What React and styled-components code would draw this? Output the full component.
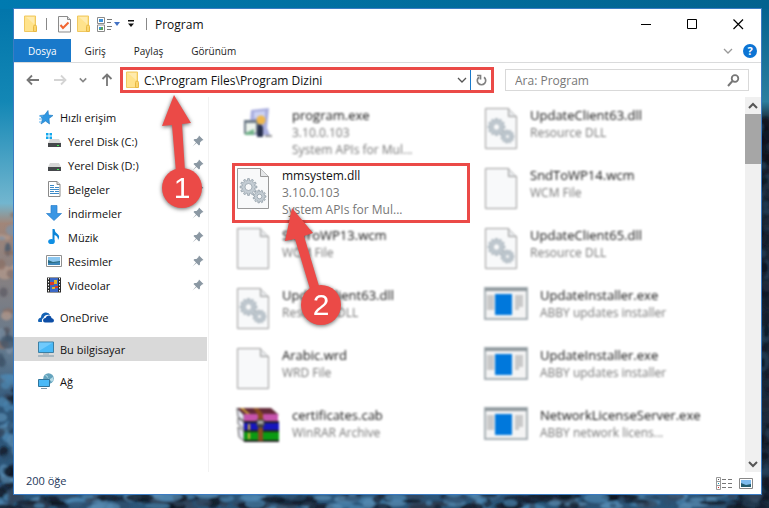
import React from 'react'
import styled, { createGlobalStyle, css } from 'styled-components'

const GlobalStyle = createGlobalStyle`
  * {
    box-sizing: border-box;
  }

  body {
    margin: 0;
    font-family: "Open Sans", "Noto Sans", sans-serif;
    font-size: 12px;
    color: #111;
  }

  button, input {
    font: inherit;
    color: inherit;
    border: none;
    background: none;
    padding: 0;
    margin: 0;
  }

  ul {
    list-style: none;
    margin: 0;
    padding: 0;
  }

  svg {
    display: block;
    flex: none;
  }
`

/* ---------- data ---------- */

const places = [
  { name: 'Hızlı erişim', icon: 'star' },
  { name: 'Yerel Disk (C:)', icon: 'system', child: true },
  { name: 'Yerel Disk (D:)', icon: 'disk', child: true },
  { name: 'Belgeler', icon: 'document', child: true },
  { name: 'İndirmeler', icon: 'download', child: true },
  { name: 'Müzik', icon: 'music', child: true },
  { name: 'Resimler', icon: 'picture', child: true },
  { name: 'Videolar', icon: 'video', child: true },
  { name: 'OneDrive', icon: 'cloud', spaced: true },
  { name: 'Bu bilgisayar', icon: 'computer', spaced: true, active: true },
  { name: 'Ağ', icon: 'network', spaced: true },
]

const files = [
  { name: 'program.exe', lines: ['3.10.0.103', 'System APIs for Mul...'], icon: 'program', wide: true },
  { name: 'UpdateClient63.dll', lines: ['Resource DLL'], icon: 'dll' },
  { name: 'mmsystem.dll', lines: ['3.10.0.103', 'System APIs for Mul...'], icon: 'dll', marked: true },
  { name: 'SndToWP14.wcm', lines: ['WCM File'], icon: 'file' },
  { name: 'SndToWP13.wcm', lines: ['WCM File'], icon: 'file' },
  { name: 'UpdateClient65.dll', lines: ['Resource DLL'], icon: 'dll' },
  { name: 'UpdateClient63.dll', lines: ['Resource DLL'], icon: 'dll' },
  { name: 'UpdateInstaller.exe', lines: ['ABBY updates installer'], icon: 'app', wide: true },
  { name: 'Arabic.wrd', lines: ['WRD File'], icon: 'file' },
  { name: 'UpdateInstaller.exe', lines: ['ABBY updates installer'], icon: 'app', wide: true },
  { name: 'certificates.cab', lines: ['WinRAR Archive'], icon: 'rar', wide: true },
  { name: 'NetworkLicenseServer.exe', lines: ['ABBY network licens...'], icon: 'app', wide: true },
]

/* ---------- wallpaper ---------- */

const rocks = []
let seed = 7
const rand = () => {
  seed = (seed * 16807) % 2147483647
  return seed / 2147483647
}
const leftColors = ['#8a6d62', '#b59a8c', '#5d5a63', '#7f93a6', '#3d5368']
const lowColors = ['#16202e', '#4b86b0', '#2c4f6e', '#0d141f', '#5a8db4', '#33455a']
for (let i = 0; i < 70; i++) {
  const y = 215 + rand() * 290
  const list = y < 370 ? leftColors : lowColors
  rocks.push({ x: rand() * 16, y, rx: 3 + rand() * 5, ry: 2 + rand() * 5, fill: list[i % list.length] })
}
for (let i = 0; i < 90; i++) {
  rocks.push({ x: 758 + rand() * 12, y: 118 + rand() * 390, rx: 2 + rand() * 4, ry: 3 + rand() * 7, fill: ['#0c1119', '#1c2b3c', '#24405a', '#141a26'][i % 4] })
}
for (let i = 0; i < 220; i++) {
  rocks.push({ x: rand() * 769, y: 494 + rand() * 15, rx: 3 + rand() * 12, ry: 2 + rand() * 3, fill: lowColors[i % 6] })
}

const Wallpaper = () => (
  <WallpaperSvg viewBox="0 0 769 508" preserveAspectRatio="none" aria-hidden="true">
    <defs>
      <linearGradient id="sky" x1="0" y1="0" x2="0" y2="1">
        <stop offset="0" stopColor="#0074aa" />
        <stop offset="0.2" stopColor="#1387b5" />
        <stop offset="0.4" stopColor="#72b6cf" />
        <stop offset="0.44" stopColor="#a18679" />
        <stop offset="0.7" stopColor="#60788e" />
        <stop offset="0.8" stopColor="#2f577a" />
        <stop offset="1" stopColor="#2b5578" />
      </linearGradient>
      <linearGradient id="side" x1="0" y1="0" x2="0" y2="1">
        <stop offset="0" stopColor="#02608f" />
        <stop offset="0.2" stopColor="#2c7f9f" />
        <stop offset="0.24" stopColor="#16202c" />
        <stop offset="1" stopColor="#1b2d40" />
      </linearGradient>
      <linearGradient id="top" x1="0" y1="0" x2="1" y2="0">
        <stop offset="0" stopColor="#007ab0" />
        <stop offset="1" stopColor="#03628f" />
      </linearGradient>
      <filter id="soft">
        <feGaussianBlur stdDeviation="1" />
      </filter>
    </defs>
    <rect width="769" height="508" fill="url(#sky)" />
    <rect x="755" width="14" height="508" fill="url(#side)" />
    <rect width="769" height="9" fill="url(#top)" />
    <g filter="url(#soft)">
      {rocks.map((r, i) => (
        <ellipse key={i} cx={r.x} cy={r.y} rx={r.rx} ry={r.ry} fill={r.fill} opacity="0.7" />
      ))}
    </g>
  </WallpaperSvg>
)

/* ---------- icons ---------- */

const FolderIcon = () => (
  <svg width="14" height="18" viewBox="0 0 14 18">
    <path d="M0.5 1h11v15.5H0.5z" fill="#ffe38c" stroke="#f0c860" />
    <path d="M9.500 16.500v-5q0-1.500 1.500-1.500t1.500 1.500v5z" fill="#fbd66f" stroke="#e8b944" />
    <path d="M2 2h8v7z" fill="#fff" opacity="0.3" />
  </svg>
)

const CheckDocIcon = () => (
  <svg width="13" height="17" viewBox="0 0 13 17">
    <path d="M0.5 0.5h9l3 3v12.5h-12z" fill="#fafafa" stroke="#8b8b8b" />
    <path d="M9.5 0.5v3h3" fill="#ddd" stroke="#8b8b8b" />
    <path d="M2.5 9l2.5 3l5.5-5.5" fill="none" stroke="#f0642f" strokeWidth="2" />
  </svg>
)

const LayoutIcon = () => (
  <svg width="15" height="15" viewBox="0 0 15 15">
    <path d="M0.5 0.5h7v6h-7zM0.5 8h7v6.5h-7z" fill="#fff" stroke="#8a8a8a" />
    <path d="M2 2h4v3H2z" fill="#3d93dd" />
    <path d="M2 10h4v3H2z" fill="#56a35b" />
    <path d="M2 10h2v2H2z" fill="#3d93dd" />
    <path d="M10 2.500h5M10 5.500h4M10 9.500h5M10 12.500h4" stroke="#777" />
  </svg>
)

const Chevron = ({ size = 10, color = '#555', up, weight = 1.3 }) => (
  <svg width={size} height={size} viewBox="0 0 10 10">
    <path d={up ? 'M1 7l4-4l4 4' : 'M1 3l4 4l4-4'} fill="none" stroke={color} strokeWidth={weight} />
  </svg>
)

const ArrowIcon = ({ color, turn = 0 }) => (
  <svg width="14" height="14" viewBox="0 0 14 14">
    <path d="M13 7H2M6 2.500L1.500 7l4.500 4.500" fill="none" stroke={color} strokeWidth="1.800" transform={`rotate(${turn} 7 7)`} />
  </svg>
)

const RefreshIcon = () => (
  <svg width="11" height="12" viewBox="0 0 11 12">
    <path d="M8 3.200A4.200 4.200 0 1 1 3 3.200M1 1.500h3.500v4" fill="none" stroke="#808080" strokeWidth="1.700" />
  </svg>
)

const SearchIcon = () => (
  <svg width="13" height="13" viewBox="0 0 13 13">
    <circle cx="8" cy="4.500" r="3.300" fill="none" stroke="#777" strokeWidth="1.800" />
    <path d="M5.500 7L1 12" stroke="#777" strokeWidth="2" />
  </svg>
)

const PinIcon = () => (
  <svg width="12" height="12" viewBox="0 0 12 12">
    <path d="M7 0.500L11.500 5L10 5.500L8 7.500L8 9.500L7 10.500L4.500 8L0.500 11.500L4 7.500L1.500 5L2.500 4L4.500 4L6.500 2z" fill="#8b98a3" />
  </svg>
)

const gear = (cx, cy, r, teeth) => {
  const points = []
  for (let i = 0; i < teeth; i++) {
    [[-0.3, 1], [-0.2, 1.3], [0.2, 1.3], [0.3, 1]].forEach(([shift, scale]) => {
      const a = ((i + shift) / teeth) * Math.PI * 2
      points.push(`${cx + Math.cos(a) * r * scale} ${cy + Math.sin(a) * r * scale}`)
    })
  }
  return `M${points.join('L')}z`
}

const PageIcon = ({ gears }) => (
  <svg width="34" height="43" viewBox="0 0 34 43">
    <path d="M1.500 1.500h23l8 8v32h-31z" fill="#f8f9fa" stroke="#999" />
    <path d="M24.500 1.500v8h8" fill="#e6e8ea" stroke="#999" />
    {gears && (
      <g fill="#c3ccd3" stroke="#8d99a3" strokeWidth="0.700">
        <path d={gear(12.5, 20, 6.5, 12)} />
        <circle cx="12.500" cy="20" r="3.500" fill="#f8f9fa" />
        <path d={gear(23.5, 29.5, 5, 11)} />
        <circle cx="23.500" cy="29.500" r="2.300" fill="#f8f9fa" />
      </g>
    )}
  </svg>
)

const AppIcon = () => (
  <svg width="44" height="33" viewBox="0 0 44 33">
    <path d="M1 1h42v31H1z" fill="#f4f4f4" stroke="#a9b1b6" strokeWidth="2" />
    <path d="M1 1h42v3H1z" fill="#8f989d" />
    <path d="M3 8h7v15H3zM31 8h8v12h-4v3h-4z" fill="#c9c9c9" />
    <path d="M11 7h17v21H11z" fill="#0078dc" />
  </svg>
)

const ProgramIcon = () => (
  <svg width="44" height="36" viewBox="0 0 44 36">
    <path d="M15 3l18-2l-2 20l3 7H13z" fill="#a9aede" />
    <path d="M18 5l11-1v7H18z" fill="#ccd2f4" />
    <path d="M8 13h15v14H8z" fill="#6d7a86" />
    <path d="M10 16h10v10H10z" fill="#eef4ee" />
    <path d="M9 26l9-4v6H9z" fill="#73b38b" />
    <circle cx="25" cy="13" r="4.500" fill="#efb84e" />
    <path d="M22 18q4-2 5 3v9h-6z" fill="#28304c" />
    <path d="M29 28h7v2h-7z" fill="#999" />
  </svg>
)

const RarIcon = () => (
  <svg width="44" height="36" viewBox="0 0 44 36">
    <path d="M1 1h34l8 7H8z" fill="#632838" />
    <path d="M1 1l7 7v6l-6-4zM2 11l6 4v7l-6-5zM2 20l6 4v10l-5-4z" fill="#e9e9f4" stroke="#555" />
    <path d="M8 7h34v8H8z" fill="#c653ad" />
    <path d="M8 16h35v8H8z" fill="#1616bd" />
    <path d="M8 25h35v9H8z" fill="#0b9a12" />
    <path d="M8 15h35M8 24h35M8 34h35" stroke="#222" strokeWidth="2" />
    <path d="M22 1l5 6v27h-5V8l-5-7z" fill="#8a4c20" />
    <path d="M21 13h7v6h-7z" fill="#aaa" stroke="#333" />
    <path d="M22 17h5v4h-5z" fill="#444" />
    <path d="M7 1l7 6h-3L4 1z" fill="#cda33b" />
    <path d="M12 17h2v6h-2zM12 26h2v6h-2z" fill="#d8b93c" />
  </svg>
)

const placeIcons = {
  star: (
    <>
      <path d="M10 1.500l0.500 4.500l4.500 0.500l-4 3l0.500 5.500l-4-3l-4.500 3l1.500-5l-2.500-3.500l4.500-0.500z" fill="#2f97e2" stroke="#1976bf" strokeWidth="0.600" />
      <path d="M1 7h4M1 10h3M1 13h3" stroke="#64b5ee" />
    </>
  ),
  system: (
    <>
      <path d="M0 0h2.500v2.500H0zM3.500 0H6v2.500H3.500zM0 3.500h2.500V6H0zM3.500 3.500H6V6H3.500z" fill="#12a8ee" />
      <path d="M4 6h9l2 4H2z" fill="#d7d7d7" />
      <path d="M2 10h13v4H2z" fill="#45484b" />
      <path d="M11 12h2v1h-2z" fill="#3bf04e" />
    </>
  ),
  disk: (
    <>
      <path d="M4 6h9l2 4H2z" fill="#d7d7d7" />
      <path d="M2 10h13v4H2z" fill="#45484b" />
      <path d="M11 12h2v1h-2z" fill="#3bf04e" />
    </>
  ),
  document: (
    <>
      <path d="M2.500 0.500h8.500l3 3v12h-11.500z" fill="#fff" stroke="#8a8a8a" />
      <path d="M11 0.500v3h3" fill="#ddd" stroke="#8a8a8a" />
      <path d="M4 4.500h4M4 6.500h4M9 6.500h4M4 8.500h9M4 10.500h4M9 10.500h4M4 12.500h9" stroke="#3c8ac8" />
    </>
  ),
  download: <path d="M5 0.500h6v8h4.500L8 15.500L0.500 8.500H5z" fill="#3a96e4" stroke="#2a7fcc" strokeWidth="0.700" />,
  music: (
    <>
      <path d="M6.500 0h2q0 3 3 5t0.500 6q0-4-3.500-5V12h-2z" fill="#0a84d8" />
      <ellipse cx="5.500" cy="12.500" rx="3.300" ry="2.600" fill="#0f8fe4" />
    </>
  ),
  picture: (
    <>
      <path d="M0.500 2.500h15v11H0.500z" fill="#fff" stroke="#909090" />
      <path d="M2 4h12v8H2z" fill="#8cc7f0" />
      <path d="M2 7l5 2l7-1v4H2z" fill="#2b6c83" />
      <path d="M2 10l6 0l6-1v3H2z" fill="#3d86b9" />
    </>
  ),
  video: (
    <>
      <path d="M1 0.500h14v15H1z" fill="#2c2c2c" />
      <path d="M4 1h8v14H4z" fill="#3b68c6" />
      <path d="M4 5h4v3H4zM9 9h3v2H9z" fill="#d83a2a" />
      <path d="M8 3h3v4H8zM6 10h3v2H6z" fill="#e2b22b" />
      <path d="M2.500 1v14M13.500 1v14" stroke="#fff" strokeDasharray="1.500 1.500" />
    </>
  ),
  cloud: (
    <>
      <path d="M0 12q0-3 3-3.500q0-4 4-5q4-0.500 5 2.500q-5-1-6.500 3q-2 0.500-1.500 4H1q-1 0-1-1z" fill="#1663b5" />
      <path d="M5 11q0.500-2 2.500-2q1-3 4-2.500q2 0.500 2 2.500q2.500 0.500 2.500 2.500q0 2-2 2H7q-2 0-2-2.500z" fill="#0d4ea6" />
    </>
  ),
  computer: (
    <>
      <path d="M0.500 1h15v10.500H0.500z" fill="#49b9f7" stroke="#3c7fa3" />
      <path d="M1 1.500h14L1 10z" fill="#8bd5ff" opacity="0.600" />
      <path d="M5 13h6" stroke="#93a7b3" />
      <path d="M0 15h16" stroke="#7b97a8" />
    </>
  ),
  network: (
    <>
      <circle cx="10.500" cy="5.500" r="5.300" fill="#64a3bd" />
      <path d="M7 2q3 0 3 3t5-1q1 3-1 5z" fill="#b7dce8" />
      <path d="M0.500 6.500h11v7H0.500z" fill="#49b9f7" stroke="#30749b" />
      <path d="M3 15.500h6" stroke="#7b97a8" />
    </>
  ),
}

const fileIcons = {
  dll: <PageIcon gears />,
  file: <PageIcon />,
  app: <AppIcon />,
  program: <ProgramIcon />,
  rar: <RarIcon />,
}

/* red arrow that ends in a numbered disc */
const Marker = ({ left, top, arrow, cx, cy, label }) => (
  <MarkerSvg $left={left} $top={top} width="72" height="126" viewBox="0 0 72 126">
    <path d={arrow} fill="#eb4a47" />
    <circle cx={cx} cy={cy} r="20" fill="#eb4a47" />
    <text x={cx} y={cy + 10} textAnchor="middle">{label}</text>
  </MarkerSvg>
)

const App = () => {
  return (
    <Desktop>
      <GlobalStyle />
      <Wallpaper />
      <Window>
        {/* Title Bar */}
        <TitleBar>
          <FolderIcon />
          <Divider />
          <QuickButton aria-label="Özellikler"><CheckDocIcon /></QuickButton>
          <QuickButton aria-label="Yeni klasör"><FolderIcon /></QuickButton>
          <QuickButton aria-label="Düzen">
            <LayoutIcon />
            <svg width="8" height="5" viewBox="0 0 8 5"><path d="M1 0h6L4 4z" fill="#4472c4" /></svg>
          </QuickButton>
          <QuickButton aria-label="Özelleştir">
            <svg width="8" height="8" viewBox="0 0 8 8"><path d="M1 0h6v1.500H1zM1 3.500h6L4 7z" fill="#111" /></svg>
          </QuickButton>
          <Divider />
          <Title>Program</Title>
          <WindowButton aria-label="Küçült"><svg width="11" height="11"><path d="M0 5.500h10" stroke="#000" /></svg></WindowButton>
          <WindowButton aria-label="Büyüt"><svg width="11" height="11"><path d="M0.500 0.500h9v9h-9z" fill="none" stroke="#000" /></svg></WindowButton>
          <WindowButton aria-label="Kapat"><svg width="11" height="11"><path d="M0.500 0.500l9.500 9.500M10 0.500l-9.500 9.500" stroke="#000" strokeWidth="1.200" /></svg></WindowButton>
        </TitleBar>

        {/* Ribbon */}
        <Ribbon>
          <Tab $primary>Dosya</Tab>
          <Tab>Giriş</Tab>
          <Tab>Paylaş</Tab>
          <Tab>Görünüm</Tab>
          <RibbonTools>
            <button aria-label="Şeridi genişlet"><Chevron color="#999" /></button>
            <HelpButton aria-label="Yardım">?</HelpButton>
          </RibbonTools>
        </Ribbon>

        {/* Address */}
        <NavBar>
          <NavButtons>
            <button aria-label="Geri"><ArrowIcon color="#777" /></button>
            <button aria-label="İleri"><ArrowIcon color="#d4d4d4" turn={180} /></button>
            <button aria-label="Son konumlar"><Chevron size={8} color="#888" weight={2} /></button>
            <button aria-label="Yukarı"><ArrowIcon color="#777" turn={90} /></button>
          </NavButtons>
          <AddressBox>
            <FolderIcon />
            <AddressInput aria-label="Adres" defaultValue="C:\Program Files\Program Dizini" />
            <AddressButton aria-label="Önceki konumlar"><Chevron size={10} /></AddressButton>
            <RefreshButton aria-label="Yenile"><RefreshIcon /></RefreshButton>
            <Marker left={31} top={22} cx={28} cy={96} label="1" arrow="M20 3L37 31L28 32L31 80H22L18 33L8 34z" />
          </AddressBox>
          <SearchBox>
            <SearchInput type="search" aria-label="Ara" placeholder="Ara: Program" />
            <SearchIcon />
          </SearchBox>
        </NavBar>

        {/* Body */}
        <Body>
          <Sidebar>
            {places.map((place) => (
              <Place key={place.name} href="#" $child={place.child} $spaced={place.spaced} $active={place.active}>
                <svg width="16" height="16" viewBox="0 0 16 16">{placeIcons[place.icon]}</svg>
                <PlaceName>{place.name}</PlaceName>
                {place.child && <PinIcon />}
              </Place>
            ))}
          </Sidebar>
          <FileGrid>
            {files.map((file, index) => (
              <FileItem key={index} $marked={file.marked}>
                <FileIcon $wide={file.wide}>{fileIcons[file.icon]}</FileIcon>
                <div>
                  <FileName $marked={file.marked}>{file.name}</FileName>
                  {file.lines.map((line) => <FileInfo key={line}>{line}</FileInfo>)}
                </div>
                {file.marked && (
                  <Marker left={41} top={37} cx={45} cy={102} label="2" arrow="M16 5L37 30L28 33L43 83L34 86L19 36L9 38z" />
                )}
              </FileItem>
            ))}
          </FileGrid>
          <ScrollBar>
            <ScrollButton aria-label="Yukarı kaydır"><Chevron up weight={2} /></ScrollButton>
            <ScrollThumb />
            <ScrollButton aria-label="Aşağı kaydır"><Chevron weight={2} /></ScrollButton>
          </ScrollBar>
        </Body>

        {/* Status */}
        <StatusBar>
          <span>200 öğe</span>
          <ViewButtons>
            <button aria-label="Ayrıntılar">
              <svg width="16" height="13" viewBox="0 0 16 13">
                <path d="M0.500 0.500h4v12h-4zM0.500 4.500h4M0.500 8.500h4" fill="none" stroke="#999" />
                <path d="M6 2.500h4M12 2.500h4M6 6.500h4M12 6.500h4M6 10.500h4M12 10.500h4" stroke="#777" />
                <path d="M2 2h1v1H2z" fill="#555" />
                <path d="M2 6h1v1H2z" fill="#19b" />
                <path d="M2 10h1v1H2z" fill="#d22" />
              </svg>
            </button>
            <button aria-label="Büyük simgeler">
              <svg width="14" height="11" viewBox="0 0 14 11">
                <path d="M0.500 0.500h13v10H0.500z" fill="#fff" stroke="#888" />
                <path d="M2 2h10v7H2z" fill="#7dbbee" />
                <path d="M2 5l5 2l5-1v3H2z" fill="#235d70" />
              </svg>
            </button>
          </ViewButtons>
        </StatusBar>
      </Window>
    </Desktop>
  )
}

const Desktop = styled.div`
  position: relative;
  display: flex;
  min-height: 100vh;
  padding: 8px 7px 13px 13px;
  overflow: hidden;
`

const WallpaperSvg = styled.svg`
  position: absolute;
  inset: 0;
  width: 100%;
  height: 100%;
`

const Window = styled.main`
  position: relative;
  flex: 1;
  min-width: 0;
  display: flex;
  flex-direction: column;
  background: #fff;
  border: 1px solid #3b7cc4;
`

const TitleBar = styled.header`
  display: flex;
  align-items: center;
  height: 30px;
  padding-left: 10px;
`

const Divider = styled.span`
  width: 1px;
  height: 12px;
  margin: 0 8px;
  background: #888;
`

const QuickButton = styled.button`
  display: flex;
  align-items: center;
  gap: 1px;
  margin: 0 3px;
`

const Title = styled.h1`
  flex: 1;
  margin: 0;
  font-size: 12px;
  font-weight: 400;
`

const WindowButton = styled.button`
  display: flex;
  justify-content: center;
  align-items: center;
  width: 46px;
  height: 30px;
`

const Ribbon = styled.nav`
  display: flex;
  height: 24px;
  border-bottom: 1px solid #dadbdc;
`

const Tab = styled.button`
  padding: 0 14px;
  font-size: 10px;
  color: ${({ $primary }) => ($primary ? '#fff' : '#222')};
  background: ${({ $primary }) => ($primary ? '#1979ca' : 'transparent')};
`

const RibbonTools = styled.div`
  display: flex;
  align-items: center;
  gap: 10px;
  margin-left: auto;
  padding-right: 4px;
`

const HelpButton = styled.button`
  width: 14px;
  height: 14px;
  border-radius: 50%;
  background: #0c74d4;
  color: #fff;
  font-size: 11px;
  font-weight: 700;
  line-height: 14px;
`

const NavBar = styled.div`
  display: flex;
  align-items: center;
  height: 34px;
  padding: 0 12px;
`

const NavButtons = styled.div`
  display: flex;
  align-items: center;
  justify-content: space-between;
  width: 88px;
  margin-right: 6px;
`

const AddressBox = styled.div`
  position: relative;
  z-index: 2;
  display: flex;
  align-items: center;
  flex: 1;
  min-width: 0;
  height: 26px;
  padding-left: 3px;
  border: 3px solid #eb4a47;
`

const AddressInput = styled.input`
  flex: 1;
  min-width: 0;
  margin-left: 4px;
  outline: none;
`

const AddressButton = styled.button`
  padding: 0 3px;
`

const RefreshButton = styled.button`
  display: flex;
  justify-content: center;
  align-items: center;
  width: 21px;
  height: 20px;
  border-left: 1px solid #1979ca;
`

const SearchBox = styled.div`
  display: flex;
  align-items: center;
  width: 244px;
  height: 22px;
  margin-left: 11px;
  padding: 0 8px 0 9px;
  border: 1px solid #d9d9d9;
`

const SearchInput = styled.input`
  flex: 1;
  min-width: 0;
  outline: none;

  &::placeholder {
    color: #777;
    opacity: 1;
  }
`

const Body = styled.div`
  display: flex;
  flex: 1;
`

const Sidebar = styled.nav`
  width: 195px;
  padding: 8px 1px 0 0;
  border-right: 1px solid #f2f2f2;
`

const Place = styled.a`
  display: flex;
  align-items: center;
  height: 24px;
  margin-top: ${({ $spaced }) => ($spaced ? '8px' : '0')};
  padding: 0 3px 0 ${({ $child }) => ($child ? '32px' : '24px')};
  font-size: 11px;
  color: #111;
  text-decoration: none;
  background: ${({ $active }) => ($active ? '#d9d9d9' : 'transparent')};
`

const PlaceName = styled.span`
  flex: 1;
  margin-left: 6px;
`

const FileGrid = styled.ul`
  flex: 1;
  min-width: 0;
  display: grid;
  grid-template-columns: 1fr 1fr;
  grid-auto-rows: 60px;
  padding: 6px 17px 8px 23px;
`

const FileItem = styled.li`
  display: flex;
  margin-right: 10px;
  padding: 4px 0 0 4px;
  white-space: nowrap;

  ${({ $marked }) =>
    $marked
      ? css`
          position: relative;
          z-index: 1;
          padding: 1px;
          border: 3px solid #eb4a47;
        `
      : css`
          filter: blur(1px);
        `}
`

const FileIcon = styled.div`
  flex: none;
  width: ${({ $wide }) => ($wide ? '56px' : '46px')};
`

const FileName = styled.div`
  font-size: ${({ $marked }) => ($marked ? '12px' : '13px')};
  line-height: 17px;
`

const FileInfo = styled.div`
  line-height: 17px;
  color: #777;
`

const ScrollBar = styled.div`
  display: flex;
  flex-direction: column;
  width: 16px;
  background: #f0f0f0;
`

const ScrollButton = styled.button`
  display: flex;
  justify-content: center;
  align-items: center;
  height: 17px;

  &:last-child {
    margin-top: auto;
  }
`

const ScrollThumb = styled.div`
  height: 50px;
  background: #a6a6a6;
`

const StatusBar = styled.footer`
  display: flex;
  justify-content: space-between;
  align-items: flex-start;
  height: 22px;
  padding: 1px 8px 0 12px;
  font-size: 11px;
  color: #1e395b;
`

const ViewButtons = styled.div`
  display: flex;
  align-items: center;
  gap: 7px;
  padding-top: 4px;
`

const MarkerSvg = styled.svg`
  position: absolute;
  left: ${({ $left }) => $left}px;
  top: ${({ $top }) => $top}px;
  filter: drop-shadow(0 1px 2px rgba(0, 0, 0, 0.6));
  pointer-events: none;

  text {
    font-family: "Liberation Sans", Arial, sans-serif;
    font-size: 30px;
    fill: #fff;
  }
`

export default App
